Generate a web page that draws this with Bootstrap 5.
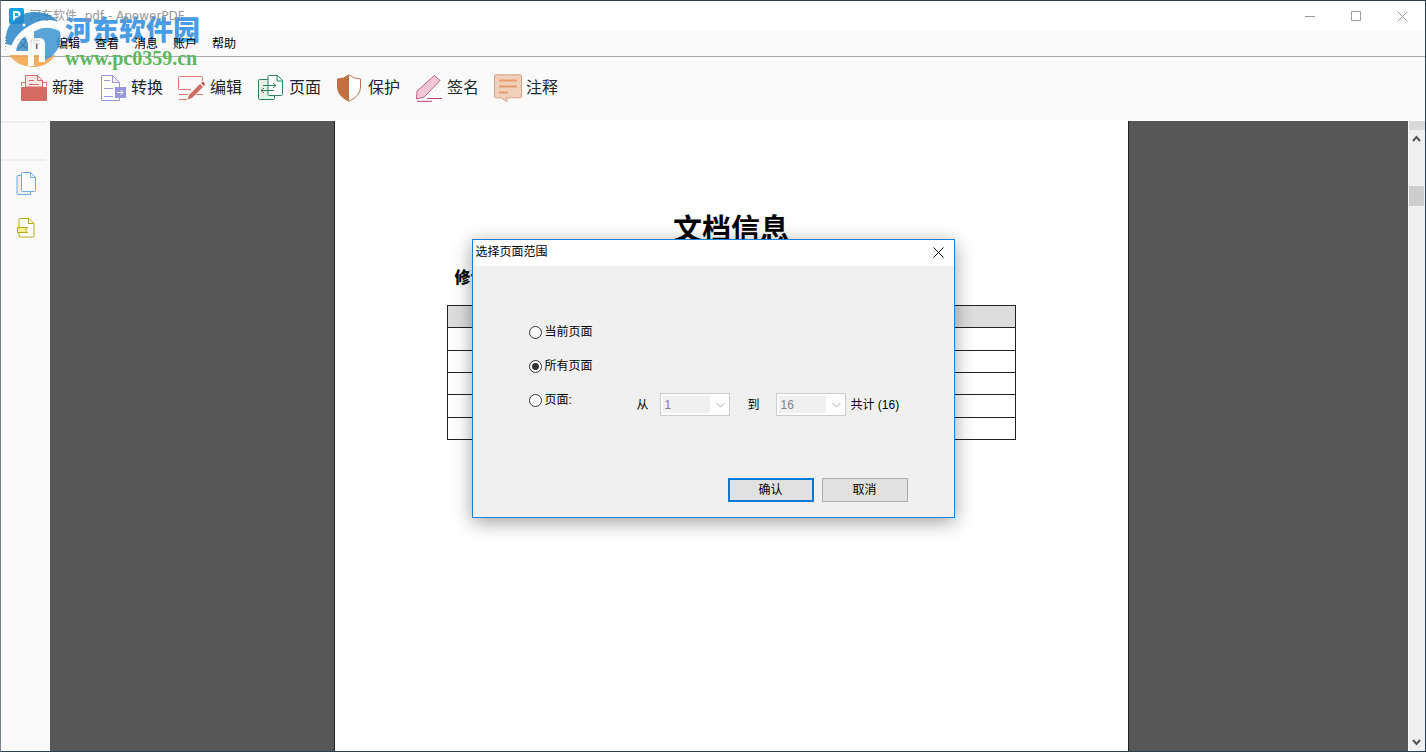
<!DOCTYPE html>
<html lang="zh-CN">
<head>
<meta charset="utf-8">
<meta name="viewport" content="width=device-width, initial-scale=1">
<title>河东软件 .pdf - ApowerPDF</title>
<link href="https://cdn.jsdelivr.net/npm/bootstrap@5.3.0/dist/css/bootstrap.min.css" rel="stylesheet">
<style>
  body { font: 12px/18px "Liberation Sans", "Noto Sans CJK SC", sans-serif; color: #000; background: #fafafa; }
  button { color: inherit; }
  svg { display: block; flex: none; }
  .app-window { border: 1px solid #2c4054; border-left-color: #76818b; }
  .title-bar { height: 30px; padding-left: 8px; background: #fff; color: #999; }
  .title-text { font-family: "DejaVu Sans", "Noto Sans CJK SC", sans-serif; z-index: 1; margin-left: 5px; }
  .caption-btn { width: 46px; height: 30px; }
  .menu-bar { height: 26px; padding-left: 3px; border-bottom: 1px solid #aaa; }
  .menu-list { gap: 15px; padding-left: 10px; z-index: 1; }
  .grip { width: 3px; height: 15px; background: radial-gradient(#999 1px, transparent 1px) 0 0 / 3px 3px; }
  .tool-bar { height: 64px; padding: 0 0 2px 19px; gap: 15px; border-bottom: 1px solid #fff; }
  .tool-btn { gap: 4px; font-size: 16px; line-height: 24px; }
  .side-bar { width: 49px; padding-right: 4px; }
  .side-head { height: 40px; border-top: 2px solid #eee; border-bottom: 2px solid #eee; }
  .side-tools { gap: 20px; padding: 9px 0 0 13px; }
  .viewer { background: #575757; }
  .sheet { width: 795px; padding: 91px 112px 0; background: #fff; border: solid #222; border-width: 0 1px; }
  .doc-title { font-size: 29px; line-height: 36px; font-weight: 700; }
  .doc-sub { font-size: 16px; line-height: 24px; font-weight: 900; margin: 18px 0 15px 8px; }
  .rev-table { width: 100%; height: 135px; border-collapse: collapse; }
  .rev-table th, .rev-table td { height: 22px; border: 1px solid #222; padding: 0; }
  .rev-table th { background: #ddd; }
  .scroll-rail { width: 17px; background: #f0f0f0; border-left: 1px solid #fff; }
  .rail-cap { height: 9px; background: #d9d9d9; }
  .rail-thumb { height: 20px; margin: 42px 1px 0 0; background: #cdcdcd; }
  .dialog-layer { padding-top: 5px; }
  .range-dialog { width: 483px; background: #f0f0f0; border: 1px solid #1a81d8; box-shadow: 0 4px 18px rgba(0,0,0,.38); }
  .dialog-title { height: 26px; padding: 0 0 2px 3px; background: #fff; }
  .close-btn { width: 30px; height: 24px; }
  .range-form { padding: 57px 46px 15px 56px; }
  .choices { gap: 16px; }
  .choice { width: 108px; gap: 3px; height: 18px; }
  .choice input { appearance: none; width: 13px; height: 13px; margin: 0; border: 1px solid #333; border-radius: 50%; background: #fff; }
  .choice input:checked { background: radial-gradient(#333 0 3px, #fff 4px); }
  .pages { margin-top: 2px; height: 23px; }
  .page-select { appearance: none; width: 70px; height: 23px; padding: 0 4px; border: 1px solid #ccc; border-radius: 0; opacity: 1; color: #878087; font-size: 12px;
    background: url("data:image/svg+xml,%3Csvg xmlns='http://www.w3.org/2000/svg' width='9' height='6'%3E%3Cpath d='M.5 1l4 4 4-4' fill='none' stroke='%23aaa'/%3E%3C/svg%3E") no-repeat 55px 8px, linear-gradient(#f0f0f0,#f0f0f0) no-repeat 2px 2px / 47px 17px #fff; }
  .from-gap { margin-right: 11px; }
  .to-gap { margin: 0 16px 0 18px; }
  .total-gap { margin-left: 5px; }
  .dialog-actions { gap: 8px; margin-top: 62px; }
  .dialog-btn { width: 86px; height: 24px; padding: 0; border: 1px solid #adadad; background: #e1e1e1; }
  .dialog-btn.is-default { border: 2px solid #0078d7; }
  .site-mark { left: 3px; top: 9px; pointer-events: none; gap: 3px; }
  .mark-logo { z-index: 2; opacity: .85; }
  .mark-words { padding-top: 4px; }
  .mark-name { font: 900 27px/30px "Noto Sans CJK SC", sans-serif; color: #4a9be6; }
  .mark-url { font: 700 20px/20px "Liberation Serif", serif; color: #5cb85c; padding-top: 4px; }
</style>
</head>
<body>
<div class="app-window vh-100 d-flex flex-column position-relative overflow-hidden">
  <header class="title-bar d-flex align-items-center">
    <svg width="15" height="16" viewBox="0 0 15 16"><rect width="15" height="16" rx="2" fill="#0ba1e8"/><path d="M5 13V4h3a2.600 2.600 0 0 1 0 5.200H5" fill="none" stroke="#fff" stroke-width="2"/></svg>
    <span class="title-text position-relative me-auto">河东软件 .pdf - ApowerPDF</span>
    <button class="caption-btn btn p-0 border-0 d-flex align-items-center justify-content-center" aria-label="最小化"><svg width="10" height="11"><path d="M0 5.500h10" stroke="#999"/></svg></button>
    <button class="caption-btn btn p-0 border-0 d-flex align-items-center justify-content-center" aria-label="最大化"><svg width="10" height="10"><path d="M.5.5h9v9h-9z" fill="none" stroke="#999"/></svg></button>
    <button class="caption-btn btn p-0 border-0 d-flex align-items-center justify-content-center" aria-label="关闭"><svg width="11" height="11"><path d="M.5.5l10 10M10.500.5l-10 10" stroke="#999"/></svg></button>
  </header>

  <nav class="menu-bar d-flex align-items-center">
    <span class="grip"></span>
    <div class="menu-list position-relative d-flex">
      <a href="#" class="text-reset text-decoration-none">文件</a>
      <a href="#" class="text-reset text-decoration-none">编辑</a>
      <a href="#" class="text-reset text-decoration-none">查看</a>
      <a href="#" class="text-reset text-decoration-none">消息</a>
      <a href="#" class="text-reset text-decoration-none">账户</a>
      <a href="#" class="text-reset text-decoration-none">帮助</a>
    </div>
  </nav>

  <div class="tool-bar d-flex align-items-center" role="toolbar">
    <button class="tool-btn btn p-0 border-0 rounded-0 d-flex align-items-center">
      <svg width="28" height="28" viewBox="0 0 28 28"><path d="M1.500 12V8.500h25V12" fill="#fff" stroke="#d26b64"/><path d="M5.500 13V1.500h12l5 5V13z" fill="#fbe9e7" stroke="#d26b64"/><path d="M17.500 1.500v5h5M9 6.500h5M9 10.500h10" fill="none" stroke="#d26b64"/><path d="M1 13h26v13a1 1 0 0 1-1 1H2a1 1 0 0 1-1-1z" fill="#d26b64"/></svg>
      <span>新建</span></button>
    <button class="tool-btn btn p-0 border-0 rounded-0 d-flex align-items-center">
      <svg width="28" height="28" viewBox="0 0 28 28"><path d="M20.500 13V8.500l-7-7h-11v25h18v-3" fill="#fff" stroke="#9797dd"/><path d="M13.500 1.500v7h7z" fill="#fbe9ea" stroke="#9797dd"/><path d="M5 6.500h6M5 14.500h9M5 22.500h9" stroke="#9797dd"/><path d="M16 13h11v11H16z" fill="#9797dd"/><path d="M18 18.500h6M21.500 16l2.500 2.500-2.500 2.500" fill="none" stroke="#fff"/></svg>
      <span>转换</span></button>
    <button class="tool-btn btn p-0 border-0 rounded-0 d-flex align-items-center">
      <svg width="28" height="28" viewBox="0 0 28 28"><path d="M.5 15V3.500a1 1 0 0 1 1-1h22a1 1 0 0 1 1 1V7M.5 15.500H13" fill="none" stroke="#dd7a70"/><path d="M1 20.500h9M1 25.500h8M18 20.500h7" stroke="#dd7a70"/><path d="M11 21L22 10l3 3-11 11-4.500 1.500z" fill="#d26b64"/><path d="M23 9l1-1h1.500l1.500 2-1 2z" fill="#b9564f"/></svg>
      <span>编辑</span></button>
    <button class="tool-btn btn p-0 border-0 rounded-0 d-flex align-items-center">
      <svg width="28" height="28" viewBox="0 0 28 28"><path d="M2.500 5.500h14a1 1 0 0 1 1 1v18a1 1 0 0 1-1 1h-14a1 1 0 0 1-1-1v-18a1 1 0 0 1 1-1z" fill="#dff5e8" stroke="#2f8159"/><path d="M12.500 1.500h8l5 5v14a1 1 0 0 1-1 1H12a1 1 0 0 1-1-1v-18a1 1 0 0 1 1.500-1z" fill="#fff" stroke="#2f8159"/><path d="M20 1.500v5.500h5.500M6 11.500h13M16 9l3 2.500-3 2.500M17 16.500H4M7 14l-3 2.500L7 19" fill="none" stroke="#2f8159"/></svg>
      <span>页面</span></button>
    <button class="tool-btn btn p-0 border-0 rounded-0 d-flex align-items-center">
      <svg width="28" height="28" viewBox="0 0 28 28"><path d="M13 .8Q18 5 24.500 5v8Q24.500 22 13 27.200 1.500 22 1.500 13V5Q8 5 13 .8z" fill="#fff" stroke="#be7148"/><path d="M13 .8Q8 5 1.500 5v8Q1.500 22 13 27.200z" fill="#c1703f"/></svg>
      <span>保护</span></button>
    <button class="tool-btn btn p-0 border-0 rounded-0 d-flex align-items-center">
      <svg width="28" height="28" viewBox="0 0 28 28"><path d="M19.500 1.500l5.500 5-16 16.500-7.500 2 .5-8z" fill="#f3c9d6" stroke="#c05f80"/><path d="M12 24.500h15M2 27.300h15" stroke="#c04070"/></svg>
      <span>签名</span></button>
    <button class="tool-btn btn p-0 border-0 rounded-0 d-flex align-items-center">
      <svg width="28" height="28" viewBox="0 0 28 28"><path d="M1.500.8h25a1 1 0 0 1 1 1v21a1 1 0 0 1-1 1H13V27.500l-6-3.700H1.500a1 1 0 0 1-1-1v-21a1 1 0 0 1 1-1z" fill="#f0d0b9" stroke="#d3a288"/><path d="M5 6.500h18M5 12.500h18M5 18.500h9" stroke="#e69a70" stroke-width="2"/></svg>
      <span>注释</span></button>
  </div>

  <div class="d-flex flex-grow-1 overflow-hidden">
    <aside class="side-bar flex-shrink-0">
      <div class="side-head"></div>
      <div class="side-tools d-flex flex-column align-items-start">
        <button class="btn p-0 border-0 rounded-0" aria-label="页面缩略图"><svg width="25" height="26" viewBox="0 0 25 26"><path d="M7.500 5.500H4a1 1 0 0 0-1 1v17a1 1 0 0 0 1 1h12.500v-3" fill="#e9f2fb" stroke="#6baaf0"/><path d="M8.500 2.500h8l5 5V20.500a1 1 0 0 1-1 1h-12a1 1 0 0 1-1-1v-17a1 1 0 0 1 1-1z" fill="#fff" stroke="#6baaf0"/><path d="M16.500 2.500v5h5" fill="none" stroke="#6baaf0"/></svg></button>
        <button class="btn p-0 border-0 rounded-0" aria-label="书签"><svg width="25" height="24" viewBox="0 0 25 24"><path d="M6 2.500h9l5 5V20a1 1 0 0 1-1 1H6a1 1 0 0 1-1-1V3.500a1 1 0 0 1 1-1z" fill="#fff" stroke="#b5a90f"/><path d="M14.500 2.500v5h5" fill="none" stroke="#b5a90f"/><path d="M3.500 11.500h10l-2 2.500 2 2.500h-10z" fill="#f7ec9e" stroke="#b5a90f"/></svg></button>
      </div>
    </aside>
    <main class="viewer flex-grow-1 d-flex justify-content-center ps-1 overflow-hidden">
      <article class="sheet flex-shrink-0">
        <h1 class="doc-title text-center m-0">文档信息</h1>
        <h2 class="doc-sub">修订</h2>
        <table class="rev-table">
          <tbody><tr><th>&nbsp;</th></tr><tr><td></td></tr><tr><td></td></tr><tr><td></td></tr><tr><td></td></tr><tr><td></td></tr></tbody>
        </table>
      </article>
    </main>
    <div class="scroll-rail flex-shrink-0 d-flex flex-column">
      <div class="rail-cap"></div>
      <svg class="mx-auto mt-1" width="10" height="10"><path d="M1 7l3.500-4L8 7" fill="none" stroke="#555" stroke-width="2"/></svg>
      <div class="rail-thumb"></div>
      <svg class="mx-auto mt-auto mb-1" width="10" height="8"><path d="M1 1l3.500 4L8 1" fill="none" stroke="#555" stroke-width="2"/></svg>
    </div>
  </div>

  <div class="site-mark position-absolute d-flex">
    <svg class="mark-logo position-relative" width="58" height="58" viewBox="0 0 58 58">
      <path d="M5 45h46Q44 57 29 57T5 45z" fill="#f2a24c"/>
      <path d="M2 34C0 14 14 2 31 2c11 0 19 4 23 10C42 7 28 12 19 21 14 26 11 31 10 36z" fill="#2a86c8"/>
      <path d="M56 22c3 14-5 24-16 29V34c0-4-2-6-6-6h-4v-9C40 12 50 13 56 22z" fill="#3d96d2"/>
      <path d="M10 38l14-17v20H10z" fill="#3d8fcb"/>
      <path d="M6 41c2-12 12-24 26-27 9-2 18 0 23 7-8-4-15-4-22-1C20 25 12 33 12 42z" fill="#fff"/>
      <path d="M21 26l9-5v7h4c5 0 7 2 7 6v18h-6V34h-5v22h-6V33z" fill="#fff"/>
      <circle cx="20" cy="15" r="1.500" fill="#fff"/>
    </svg>
    <div class="mark-words"><div class="mark-name">河东软件园</div><div class="mark-url">www.pc0359.cn</div></div>
  </div>

  <div class="dialog-layer position-absolute top-0 start-0 w-100 h-100 d-flex align-items-center justify-content-center">
    <section class="range-dialog" role="dialog" aria-labelledby="rangeTitle">
      <div class="dialog-title d-flex align-items-center justify-content-between">
        <span id="rangeTitle">选择页面范围</span>
        <button class="close-btn btn p-0 border-0 d-flex align-items-center justify-content-center" aria-label="关闭"><svg width="11" height="11"><path d="M.5.5l10 10M10.500.5l-10 10" stroke="#000"/></svg></button>
      </div>
      <form class="range-form">
        <div class="choices d-flex flex-column">
          <label class="choice d-flex align-items-center"><input type="radio" name="range">当前页面</label>
          <label class="choice d-flex align-items-center"><input type="radio" name="range" checked>所有页面</label>
          <div class="d-flex align-items-start">
            <label class="choice d-flex align-items-center"><input type="radio" name="range">页面:</label>
            <div class="pages d-flex align-items-center">
              <label class="from-gap" for="fromPage">从</label>
              <select class="page-select" id="fromPage" disabled><option>1</option></select>
              <label class="to-gap" for="toPage">到</label>
              <select class="page-select" id="toPage" disabled><option>16</option></select>
              <span class="total-gap">共计 (16)</span>
            </div>
          </div>
        </div>
        <div class="dialog-actions d-flex justify-content-end">
          <button type="button" class="dialog-btn is-default">确认</button>
          <button type="button" class="dialog-btn">取消</button>
        </div>
      </form>
    </section>
  </div>
</div>
<script src="https://cdn.jsdelivr.net/npm/bootstrap@5.3.0/dist/js/bootstrap.bundle.min.js"></script>
</body>
</html>
